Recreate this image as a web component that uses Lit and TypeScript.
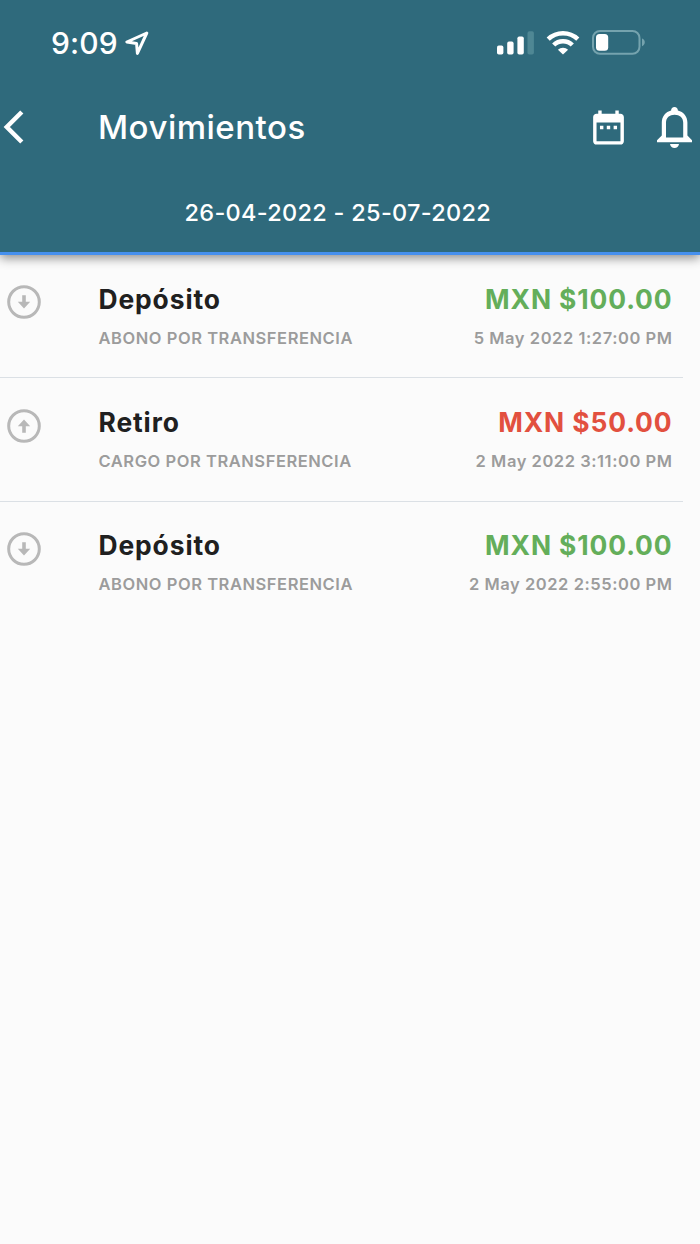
import { LitElement, html, css, svg } from "lit";
import { customElement, property } from "lit/decorators.js";

interface Movement {
  kind: "deposit" | "withdrawal";
  title: string;
  detail: string;
  amount: string;
  date: string;
}

const MOVEMENTS: Movement[] = [
  { kind: "deposit", title: "Depósito", detail: "ABONO POR TRANSFERENCIA", amount: "MXN $100.00", date: "5 May 2022 1:27:00 PM" },
  { kind: "withdrawal", title: "Retiro", detail: "CARGO POR TRANSFERENCIA", amount: "MXN $50.00", date: "2 May 2022 3:11:00 PM" },
  { kind: "deposit", title: "Depósito", detail: "ABONO POR TRANSFERENCIA", amount: "MXN $100.00", date: "2 May 2022 2:55:00 PM" },
];

@customElement("status-bar")
export class StatusBar extends LitElement {
  static styles = css`
    :host { display: flex; align-items: center; height: 87px; box-sizing: border-box; padding: 0 54px 1.4px 51px; }
    .time { font-size: 30px; font-weight: 500; line-height: 40px; letter-spacing: 0.1px; }
    .arrow { margin-left: 6.5px; }
    .signal { margin-left: auto; }
    .wifi { margin-left: 12px; }
    .battery { margin-left: 12px; }
    svg { display: block; }
  `;
  render() {
    return html`
      <span class="time">9:09</span>
      <svg class="arrow" width="26" height="26" viewBox="0 0 26 26" fill="none" stroke="#fff" stroke-width="3" stroke-linejoin="round">
        <path d="M22.8 3 L2.8 12 L12.6 13.6 L13.4 23.4 Z" />
      </svg>
      <svg class="signal" width="37" height="24" viewBox="0 0 37 24" fill="#fff">
        <rect x="0" y="14.6" width="6.4" height="9" rx="1.8" />
        <rect x="10.2" y="10.6" width="6.4" height="13" rx="1.8" />
        <rect x="20.4" y="5.4" width="6.4" height="18.2" rx="1.8" />
        <rect x="30.5" y="0.2" width="6.4" height="23.4" rx="1.8" fill="#4f8794" />
      </svg>
      <svg class="wifi" width="34" height="24" viewBox="0 0 34 24" fill="none" stroke="#fff" stroke-width="4.5">
        <path d="M2.2 8.2 A21.5 21.5 0 0 1 31.8 8.2" />
        <path d="M7.7 14 A13.2 13.2 0 0 1 26.3 14" />
        <path d="M17 23.6 L11.9 18.7 A7.4 7.4 0 0 1 22.1 18.7 Z" fill="#fff" stroke="none" />
      </svg>
      <svg class="battery" width="54" height="25" viewBox="0 0 54 25">
        <rect x="1" y="1" width="46.5" height="22.8" rx="7" fill="none" stroke="#75a3ae" stroke-width="2" />
        <rect x="4" y="4" width="12.2" height="16.8" rx="3.5" fill="#fff" />
        <path d="M50 8.6 C53.7 9.8 53.7 15 50 16.2 Z" fill="#75a3ae" />
      </svg>
    `;
  }
}

@customElement("nav-bar")
export class NavBar extends LitElement {
  static styles = css`
    :host { display: flex; align-items: center; height: 80px; box-sizing: border-box; padding: 0 7px 0 3px; }
    .title { margin-left: 74px; font-size: 33px; font-weight: 500; line-height: 40px; letter-spacing: 0.5px; }
    .calendar { margin-left: auto; }
    .bell { margin-left: 28px; }
    svg { display: block; }
  `;
  render() {
    return html`
      <svg width="21" height="34" viewBox="0 0 21 34" fill="none" stroke="#fff" stroke-width="4.5">
        <path d="M18.8 2 L3.8 17 L18.8 32" />
      </svg>
      <span class="title">Movimientos</span>
      <svg class="calendar" width="41" height="41" viewBox="0 0 24 24" fill="#fff">
        <path d="M9 11H7v2h2v-2zm4 0h-2v2h2v-2zm4 0h-2v2h2v-2zm2-7h-1V2h-2v2H8V2H6v2H5c-1.11 0-1.99.9-1.99 2L3 20c0 1.1.89 2 2 2h14c1.1 0 2-.9 2-2V6c0-1.1-.9-2-2-2zm0 16H5V9h14v11z" />
      </svg>
      <svg class="bell" width="36" height="42" viewBox="0 -1 36 42" fill="#fff">
        <path fill-rule="evenodd" d="M17.5 0 C19.5 0 20.9 1.4 20.9 3.4 C26.5 4.7 30.4 9.5 30.4 15.5 V28.5 L35 33.3 V35.2 H0 V33.3 L4.8 28.5 V15.5 C4.8 9.5 8.6 4.7 14.1 3.4 C14.1 1.4 15.5 0 17.5 0 Z M9 30.5 H26.2 V15.8 C26.2 10.7 22.6 7.8 17.6 7.8 C12.6 7.8 9 10.7 9 15.8 Z" />
        <path d="M13 37 H22 C21.6 39.6 19.8 41 17.5 41 C15.2 41 13.4 39.6 13 37 Z" />
      </svg>
    `;
  }
}

@customElement("movement-row")
export class MovementRow extends LitElement {
  @property({ attribute: false }) item!: Movement;
  @property({ type: Boolean }) last = false;

  static styles = css`
    :host { display: block; height: 123.3px; }
    .row { display: flex; align-items: flex-start; height: 100%; box-sizing: border-box; margin-right: 17px; padding: 23.8px 10.5px 0 7px; border-bottom: 1px solid #dbe0e5; }
    .row.last { border-bottom-color: transparent; }
    .icon { display: block; flex: none; margin-top: 6.6px; }
    .left, .right { display: flex; flex-direction: column; white-space: nowrap; }
    .left { margin-left: 57.5px; }
    .right { margin-left: auto; align-items: flex-end; }
    .title { font-size: 26.4px; font-weight: 650; line-height: 41px; letter-spacing: 0.9px; color: #202020; }
    .amount { font-size: 26.4px; font-weight: 680; line-height: 41px; letter-spacing: 0.9px; }
    .deposit { color: #64ae5a; }
    .withdrawal { color: #e2503f; }
    .detail, .date { font-size: 16.5px; font-weight: 600; line-height: 36px; color: #9c9c9c; letter-spacing: 0.55px; }
  `;
  render() {
    const m = this.item;
    const arrow = m.kind === "deposit"
      ? svg`<path d="M15.2 10.2 H18.8 V16.8 H23.2 L17 23.4 L10.8 16.8 H15.2 Z" />`
      : svg`<path d="M15.2 23.8 H18.8 V17.2 H23.2 L17 10.6 L10.8 17.2 H15.2 Z" />`;
    return html`
      <div class="row ${this.last ? "last" : ""}">
        <svg class="icon" width="34" height="34" viewBox="0 0 34 34" fill="#b8b8b8">
          <circle cx="17" cy="17" r="15.3" fill="none" stroke="#b8b8b8" stroke-width="3" />
          ${arrow}
        </svg>
        <div class="left"><span class="title">${m.title}</span><span class="detail">${m.detail}</span></div>
        <div class="right"><span class="amount ${m.kind}">${m.amount}</span><span class="date">${m.date}</span></div>
      </div>
    `;
  }
}

@customElement("app-root")
export class AppRoot extends LitElement {
  static styles = css`
    :host { display: block; min-height: 1244px; background: #fbfbfb; font-family: Inter, "Liberation Sans", sans-serif; }
    .header { height: 255px; box-sizing: border-box; background: #2f6a7c; color: #fff; border-bottom: 3px solid #4690ee; box-shadow: 0 3px 10px rgba(0, 0, 0, 0.45); }
    .range { padding: 26px 0 0 184.5px; font-size: 23.5px; font-weight: 500; line-height: 40px; letter-spacing: 0.3px; white-space: nowrap; }
  `;
  render() {
    return html`
      <div class="header">
        <status-bar></status-bar>
        <nav-bar></nav-bar>
        <div class="range">26-04-2022 - 25-07-2022</div>
      </div>
      <div class="list">
        ${MOVEMENTS.map((m, i) => html`<movement-row .item=${m} ?last=${i === MOVEMENTS.length - 1}></movement-row>`)}
      </div>
    `;
  }
}
